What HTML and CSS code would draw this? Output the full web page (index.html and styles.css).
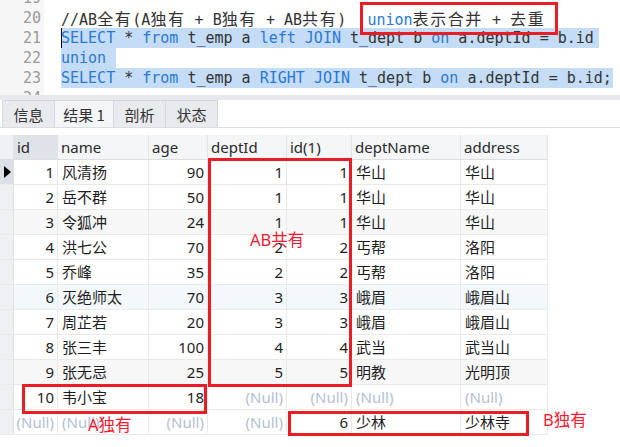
FILE: index.html
```html
<!DOCTYPE html>
<html>
<head>
<meta charset="utf-8">
<link rel="stylesheet" href="styles.css">
</head>
<body>
<div class="page">
  <div class="editor">
    <div class="gutter">
      <div class="lines">
        <div class="ln">19</div>
        <div class="ln">20</div>
        <div class="ln">21</div>
        <div class="ln">22</div>
        <div class="ln">23</div>
        <div class="ln">24</div>
      </div>
    </div>
    <div class="code">
      <div class="lines">
        <div class="cl"></div>
        <div class="cl">//AB<span class="cj">全有</span>(A<span class="cj">独有</span> + B<span class="cj">独有</span> + AB<span class="cj">共有</span>)  <span class="kw note">union</span><span class="cj">表示合并</span> + <span class="cj">去重</span></div>
        <div class="cl"><span class="sel cursor"><span class="kw">SELECT</span> * <span class="kw">from</span> t_emp a <span class="kw">left</span> <span class="kw">JOIN</span> t_dept b <span class="kw">on</span> a.deptId = b.id</span></div>
        <div class="cl"><span class="sel sel-wide"><span class="kw">union</span></span></div>
        <div class="cl"><span class="sel sel-tight"><span class="kw">SELECT</span> * <span class="kw">from</span> t_emp a <span class="kw">RIGHT</span> <span class="kw">JOIN</span> t_dept b <span class="kw">on</span> a.deptId = b.id;</span></div>
        <div class="cl"></div>
      </div>
    </div>
  </div>
  <div class="hscroll"></div>
  <div class="tabs">
    <div class="tab">信息</div>
    <div class="tab active">结果 1</div>
    <div class="tab">剖析</div>
    <div class="tab">状态</div>
  </div>
  <div class="grid">
    <div class="hd ind"></div><div class="hd sorted">id</div><div class="hd">name</div><div class="hd">age</div><div class="hd">deptId</div><div class="hd">id(1)</div><div class="hd">deptName</div><div class="hd">address</div>

    <div class="c ind cur"><span class="tri"></span></div><div class="c r">1</div><div class="c">风清扬</div><div class="c r">90</div><div class="c r">1</div><div class="c r">1</div><div class="c">华山</div><div class="c">华山</div>
    <div class="c ind"></div><div class="c r">2</div><div class="c">岳不群</div><div class="c r">50</div><div class="c r">1</div><div class="c r">1</div><div class="c">华山</div><div class="c">华山</div>
    <div class="c ind"></div><div class="c r alt">3</div><div class="c alt">令狐冲</div><div class="c r alt">24</div><div class="c r alt">1</div><div class="c r alt">1</div><div class="c alt">华山</div><div class="c alt">华山</div>
    <div class="c ind"></div><div class="c r">4</div><div class="c">洪七公</div><div class="c r">70</div><div class="c r">2</div><div class="c r">2</div><div class="c">丐帮</div><div class="c">洛阳</div>
    <div class="c ind"></div><div class="c r">5</div><div class="c">乔峰</div><div class="c r">35</div><div class="c r">2</div><div class="c r">2</div><div class="c">丐帮</div><div class="c">洛阳</div>
    <div class="c ind"></div><div class="c r hov">6</div><div class="c hov">灭绝师太</div><div class="c r hov">70</div><div class="c r hov">3</div><div class="c r hov">3</div><div class="c hov">峨眉</div><div class="c hov">峨眉山</div>
    <div class="c ind"></div><div class="c r">7</div><div class="c">周芷若</div><div class="c r">20</div><div class="c r">3</div><div class="c r">3</div><div class="c">峨眉</div><div class="c">峨眉山</div>
    <div class="c ind"></div><div class="c r">8</div><div class="c">张三丰</div><div class="c r">100</div><div class="c r">4</div><div class="c r">4</div><div class="c">武当</div><div class="c">武当山</div>
    <div class="c ind"></div><div class="c r alt">9</div><div class="c alt">张无忌</div><div class="c r alt">25</div><div class="c r alt">5</div><div class="c r alt">5</div><div class="c alt">明教</div><div class="c alt">光明顶</div>
    <div class="c ind"></div><div class="c r">10</div><div class="c">韦小宝</div><div class="c r">18</div><div class="c r null">(Null)</div><div class="c r null">(Null)</div><div class="c null">(Null)</div><div class="c null">(Null)</div>
    <div class="c ind"></div><div class="c r null">(Null)</div><div class="c null">(Null)</div><div class="c r null">(Null)</div><div class="c r null">(Null)</div><div class="c r">6</div><div class="c">少林</div><div class="c">少林寺</div>
  </div>

  <div class="mark m-union"></div>
  <div class="mark m-ab"></div>
  <div class="mark m-a"></div>
  <div class="mark m-b"></div>
  <div class="label l-ab">AB共有</div>
  <div class="label l-a">A独有</div>
  <div class="label l-b">B独有</div>
</div>
</body>
</html>
```

FILE: styles.css
```css
html, body {
  margin: 0;
  padding: 0;
  background: #ffffff;
}
.page {
  position: relative;
  width: 620px;
  height: 447px;
  overflow: hidden;
  background: #ffffff;
}
.editor {
  display: flex;
  height: 95px;
  overflow: hidden;
  font-family: "DejaVu Sans Mono", "Noto Sans CJK SC", monospace;
  font-size: 15px;
}
.lines {
  margin-top: -12px;
}
.gutter {
  width: 44px;
  flex: none;
  background: #f6f6f6;
}
.ln {
  height: 20px;
  line-height: 20px;
  text-align: right;
  padding-right: 3px;
  color: #9a9a9a;
}
.code {
  flex: 1;
  padding-left: 17px;
  color: #333333;
}
.cl {
  height: 20px;
  line-height: 20px;
  white-space: pre;
}
.cj {
  font-family: "Noto Sans CJK SC", sans-serif;
  font-size: 16px;
  letter-spacing: 1.6px;
  line-height: 20px;
}
.kw {
  color: #2a78d6;
}
.note {
  margin-left: 3px;
}
.sel {
  display: inline-block;
  height: 20px;
  background: #c4dcf5;
  padding-right: 5px;
}
.sel-wide {
  padding-right: 10px;
}
.sel-tight {
  padding-right: 1px;
}
.cursor {
  box-shadow: inset 1px 0 0 #000000;
}
.hscroll {
  height: 5px;
  background: #e8e9ec;
}
.tabs {
  display: flex;
  height: 28px;
  padding-left: 2px;
  box-sizing: border-box;
  border-bottom: 1px solid #dadde1;
  font-family: "Noto Sans CJK SC", sans-serif;
  font-size: 15px;
  color: #333333;
}
.tab {
  display: flex;
  align-items: center;
  justify-content: center;
  width: 51px;
  background: #e8eaee;
  border: 1px solid #d4d7dc;
  border-bottom: none;
  margin-right: -1px;
}
.tab.active {
  width: 58px;
  background: #f4f5f7;
}
.grid {
  display: grid;
  grid-template-columns: 14px 44px 91px 59px 79px 65px 109px 87px;
  width: 548px;
  margin-top: 7px;
  font-family: "Noto Sans", "Noto Sans CJK SC", sans-serif;
  font-size: 15px;
  color: #1e1e1e;
}
.hd {
  height: 25px;
  box-sizing: border-box;
  background: #f4f5f7;
  border-right: 1px solid #e1e3e7;
  border-bottom: 1px solid #dcdee2;
  padding-left: 3px;
  line-height: 24px;
  color: #2a2a2a;
}
.hd.ind {
  padding-left: 0;
  background: #f0f1f4;
}
.hd.sorted {
  background: #dfe2e8;
}
.c {
  height: 25px;
  box-sizing: border-box;
  border-right: 1px solid #e9e9e9;
  border-bottom: 1px solid #e9e9e9;
  padding: 0 4px;
  line-height: 24px;
  white-space: nowrap;
  overflow: hidden;
}
.c.r {
  text-align: right;
  padding: 0 3px 0 0;
}
.c.ind {
  padding: 0;
  background: #eff0f3;
  border-right: 1px solid #e1e3e7;
  display: flex;
  align-items: center;
}
.c.cur {
  background: #dcdfe5;
}
.tri {
  width: 0;
  height: 0;
  margin-left: 4px;
  border-left: 7px solid #000000;
  border-top: 6px solid transparent;
  border-bottom: 6px solid transparent;
}
.alt {
  background: #f7f7f7;
}
.hov {
  background: #f3f8fd;
}
.null {
  color: #b4c0d4;
}
.mark {
  position: absolute;
  border: 3px solid #ea1c24;
  box-sizing: border-box;
}
.m-union {
  left: 360px;
  top: 2px;
  width: 198px;
  height: 33px;
}
.m-ab {
  left: 208px;
  top: 158px;
  width: 144px;
  height: 229px;
}
.m-a {
  left: 22px;
  top: 384px;
  width: 185px;
  height: 30px;
}
.m-b {
  left: 288px;
  top: 411px;
  width: 241px;
  height: 25px;
}
.label {
  position: absolute;
  font-family: "Noto Sans", "Noto Sans CJK SC", sans-serif;
  font-size: 16.5px;
  line-height: 20px;
  color: #f21a32;
  white-space: nowrap;
}
.l-ab {
  left: 250px;
  top: 230px;
}
.l-a {
  left: 88px;
  top: 415px;
}
.l-b {
  left: 543px;
  top: 410px;
}
```
